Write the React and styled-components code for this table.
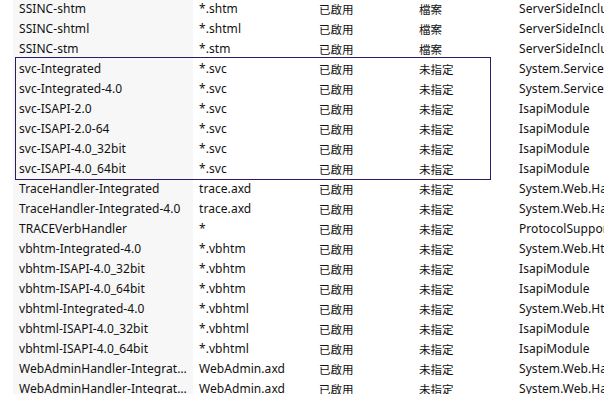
import React from "react";
import styled, { createGlobalStyle } from "styled-components";

const GlobalStyle = createGlobalStyle`
  html, body {
    margin: 0;
    padding: 0;
    background: #fff;
    overflow: hidden;
  }
  body {
    font-family: "Noto Sans", "Noto Sans CJK TC", sans-serif;
    font-size: 12px;
    color: #111;
  }
`;

const List = styled.div`
  width: 604px;
  height: 394px;
  overflow: hidden;
  padding-left: 13px;
  box-sizing: border-box;
`;

const Rows = styled.div`
  margin-top: -1px;
`;

// focus frame drawn over the selected handler rows
const Group = styled.div`
  position: relative;
  &::after {
    content: "";
    position: absolute;
    left: 2px;
    top: -2px;
    width: 474px;
    height: 121px;
    border: 1px solid #2d1a6a;
    pointer-events: none;
  }
`;

const Row = styled.div`
  display: grid;
  grid-template-columns: 180px 120px 100px 100px 200px;
  height: 20px;
  align-items: center;
`;

const Cell = styled.div`
  padding: 0 6px;
  overflow: hidden;
  white-space: nowrap;
  text-overflow: ${(p) => (p.$ellipsis ? "ellipsis" : "clip")};
  line-height: 20px;
  height: 20px;
  letter-spacing: ${(p) => (p.$cjk ? "0" : "0.06px")};
  background: ${(p) => (p.$shaded ? "#f7f7f7" : "transparent")};
  font-family: ${(p) =>
    p.$cjk ? '"Noto Sans CJK TC", sans-serif' : '"Noto Sans", "Noto Sans CJK TC", sans-serif'};
  font-size: ${(p) => (p.$cjk ? "11.5px" : "12px")};
`;

const NameCell = styled(Cell)`
  padding-right: 3px;
`;

const ModuleCell = styled(Cell)`
  padding-right: 0;
`;

const SVC = "System.ServiceModel.Activation.HttpHandler";
const HANDLER = "System.Web.Handlers.TraceHandler";
const FORBID = "System.Web.HttpForbiddenHandler";
const ADMIN = "System.Web.Handlers.WebAdminHandler";

const before = [
  ["SSINC-shtm", "*.shtm", "檔案", "ServerSideIncludeModule"],
  ["SSINC-shtml", "*.shtml", "檔案", "ServerSideIncludeModule"],
  ["SSINC-stm", "*.stm", "檔案", "ServerSideIncludeModule"],
];

const grouped = [
  ["svc-Integrated", "*.svc", "未指定", SVC],
  ["svc-Integrated-4.0", "*.svc", "未指定", SVC],
  ["svc-ISAPI-2.0", "*.svc", "未指定", "IsapiModule"],
  ["svc-ISAPI-2.0-64", "*.svc", "未指定", "IsapiModule"],
  ["svc-ISAPI-4.0_32bit", "*.svc", "未指定", "IsapiModule"],
  ["svc-ISAPI-4.0_64bit", "*.svc", "未指定", "IsapiModule"],
];

const after = [
  ["TraceHandler-Integrated", "trace.axd", "未指定", HANDLER],
  ["TraceHandler-Integrated-4.0", "trace.axd", "未指定", HANDLER],
  ["TRACEVerbHandler", "*", "未指定", "ProtocolSupportModule"],
  ["vbhtm-Integrated-4.0", "*.vbhtm", "未指定", FORBID],
  ["vbhtm-ISAPI-4.0_32bit", "*.vbhtm", "未指定", "IsapiModule"],
  ["vbhtm-ISAPI-4.0_64bit", "*.vbhtm", "未指定", "IsapiModule"],
  ["vbhtml-Integrated-4.0", "*.vbhtml", "未指定", FORBID],
  ["vbhtml-ISAPI-4.0_32bit", "*.vbhtml", "未指定", "IsapiModule"],
  ["vbhtml-ISAPI-4.0_64bit", "*.vbhtml", "未指定", "IsapiModule"],
  ["WebAdminHandler-Integrated", "WebAdmin.axd", "未指定", ADMIN],
  ["WebAdminHandler-Integrated-4.0", "WebAdmin.axd", "未指定", ADMIN],
];

const HandlerRow = ({ row }) => {
  const [name, path, type, module] = row;
  return (
    <Row>
      <NameCell $shaded $ellipsis>
        {name}
      </NameCell>
      <Cell>{path}</Cell>
      <Cell $cjk>已啟用</Cell>
      <Cell $cjk>{type}</Cell>
      <ModuleCell>{module}</ModuleCell>
    </Row>
  );
};

const App = () => (
  <>
    <GlobalStyle />
    <List>
      <Rows>
        {before.map((r) => (
          <HandlerRow key={r[0]} row={r} />
        ))}
        <Group>
          {grouped.map((r) => (
            <HandlerRow key={r[0]} row={r} />
          ))}
        </Group>
        {after.map((r) => (
          <HandlerRow key={r[0]} row={r} />
        ))}
      </Rows>
    </List>
  </>
);

export default App;
